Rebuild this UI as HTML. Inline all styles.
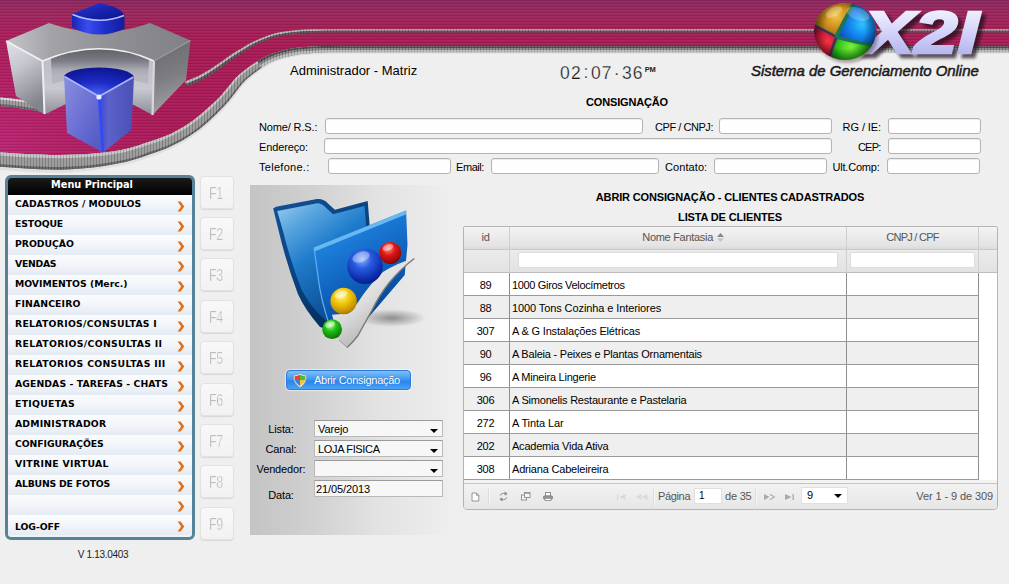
<!DOCTYPE html>
<html lang="pt-br">
<head>
<meta charset="utf-8">
<title>X2I - Sistema de Gerenciamento Online</title>
<style>
html,body{margin:0;padding:0;}
body{width:1009px;height:584px;overflow:hidden;background:#efefef;position:relative;font-family:"Liberation Sans",sans-serif;font-size:11px;color:#111;}
.abs{position:absolute;white-space:nowrap;}
#hdr{position:absolute;left:0;top:0;width:1009px;height:180px;}
.lbl{position:absolute;white-space:nowrap;font-size:11px;line-height:14px;letter-spacing:-0.15px;color:#000;}
.inp{position:absolute;box-sizing:border-box;height:16px;background:#fff;border:1px solid #b4b4b4;border-radius:3px;box-shadow:inset 0 1px 1px rgba(0,0,0,.08);}
.ttl{position:absolute;white-space:nowrap;font-weight:bold;font-size:11px;line-height:14px;letter-spacing:-0.15px;color:#000;text-align:center;}
/*MENU*/
#menu{position:absolute;left:5px;top:175px;width:190px;height:365px;box-sizing:border-box;border:3px solid #56839a;border-radius:6px;background:#eef3f8;overflow:hidden;}
#menu .mt{height:17px;background:linear-gradient(#1a1a1a,#000);color:#fff;font-family:"DejaVu Sans","Liberation Sans",sans-serif;font-weight:bold;font-size:9.750px;line-height:14px;text-align:center;text-indent:-16px;}
#menu .mi{position:relative;height:20px;background:linear-gradient(#fbfcfe 0%,#f3f6fa 45%,#e4ebf3 100%);font-family:"DejaVu Sans","Liberation Sans",sans-serif;font-weight:bold;font-size:9.300px;line-height:18px;padding-left:7px;color:#000;}
#menu .mi i{position:absolute;right:7px;top:6px;width:8px;height:11px;line-height:0;}
/*FKEYS*/
.fk{position:absolute;left:200px;width:34px;height:33px;box-sizing:border-box;border:1px solid #e2e2e2;border-radius:4px;background:linear-gradient(#f8f8f8,#f2f2f2);box-shadow:0 1px 1px rgba(0,0,0,.10);color:#a4a4a4;font-size:16px;line-height:33px;text-align:center;letter-spacing:-0.5px;}
.fk span{display:inline-block;transform:scaleX(.78);-webkit-text-stroke:0.55px #f5f5f5;position:relative;left:-1px;}

/*PANEL*/
#panel{position:absolute;left:250px;top:185px;width:200px;height:350px;background:linear-gradient(90deg,#c4c4c4 0%,#d0d0d0 30%,#e3e3e3 65%,#eeeeee 100%);}
.sel{position:absolute;left:314px;width:129px;height:17px;box-sizing:border-box;background:#f7f7f7;border:1px solid #b9b9b9;border-top-color:#9a9a9a;font-size:11px;line-height:16px;padding-left:3px;color:#000;letter-spacing:-0.1px;}
.sel:after{content:"";position:absolute;right:4px;top:8px;border:4px solid transparent;border-top:4px solid #000;border-bottom:0;}
.pl{position:absolute;left:250px;width:62px;text-align:center;font-size:11px;line-height:14px;letter-spacing:-0.15px;color:#000;}
#btn{position:absolute;left:286px;top:370px;width:125px;height:20px;box-sizing:border-box;border:1px solid #2a7adf;border-radius:4px;background:linear-gradient(#7dc1fa 0%,#4099f2 45%,#2b85ec 58%,#49a3f6 100%);color:#fff;font-size:11px;line-height:19px;letter-spacing:-0.27px;text-shadow:0 0 1px rgba(0,60,160,.55);box-shadow:0 0 1px 1px rgba(255,255,255,.55);}
#btn span{position:absolute;left:27px;top:0;}
/*GRID*/
#grid{position:absolute;left:463px;top:226px;width:535px;height:284px;box-sizing:border-box;border:1px solid #b5b5b5;border-radius:2px 2px 4px 4px;background:#f3f3f3;overflow:hidden;}
#grid .gh{position:absolute;left:0;top:0;width:100%;height:23px;background:linear-gradient(#f4f4f4,#e3e3e3 85%,#dadada);border-bottom:1px solid #c9c9c9;box-sizing:border-box;}
#grid .gf{position:absolute;left:0;top:23px;width:100%;height:23px;background:linear-gradient(#ececec,#e2e2e2);border-bottom:1px solid #bdbdbd;box-sizing:border-box;}
#grid .hc{position:absolute;top:0;height:46px;border-right:1px solid #cfcfcf;box-sizing:border-box;color:#555;font-size:11px;line-height:20px;text-align:center;letter-spacing:-0.3px;}
#grid .fi{position:absolute;top:25px;height:16px;box-sizing:border-box;background:#fff;border:1px solid #dcdcdc;border-radius:2px;}
#grid .row{position:absolute;left:0;width:515px;height:23px;box-sizing:border-box;border-bottom:1px solid #9a9a9a;font-size:11px;line-height:25px;letter-spacing:-0.3px;color:#000;}
#grid .row.alt{background:#efefef;} #grid .row{background:#fff;}
#grid .row b{position:absolute;left:0;top:0;width:46px;height:22px;border-right:1px solid #8f8f8f;font-weight:normal;text-align:center;box-sizing:border-box;text-indent:-2px;}
#grid .row u{position:absolute;left:46px;top:0;width:337px;height:22px;border-right:1px solid #8f8f8f;text-decoration:none;padding-left:2px;box-sizing:border-box;}
#grid .row s{position:absolute;left:383px;top:0;width:132px;height:22px;border-right:1px solid #8f8f8f;box-sizing:border-box;}
#grid .gut{position:absolute;left:515px;top:46px;width:19px;height:207px;background:#fff;}
#grid .pg{position:absolute;left:-1px;top:256px;width:536px;height:27px;background:linear-gradient(#f2f2f2,#e6e6e6);border-top:1px solid #c4c4c4;box-sizing:border-box;font-size:11px;line-height:25px;color:#555;}
#grid .pg .t{position:absolute;top:0;white-space:nowrap;}
#grid .pg .bx{position:absolute;top:5px;height:16px;background:#fff;box-sizing:border-box;border:1px solid #e0e0e0;color:#000;line-height:14px;padding-left:4px;font-size:10px;}
#grid .pg .sp{position:absolute;top:4px;width:1px;height:18px;background:#dedede;border-right:1px solid #f6f6f6;}
.sel.nd:after{display:none;}.sel.nd{line-height:17px;padding-left:1px;}
#menu .mi.last{line-height:23px;}
</style>
</head>
<body>
<!--HEADER-->
<svg id="hdr" viewBox="0 0 1009 180">
<defs>
<linearGradient id="gm" x1="0" y1="0" x2="0" y2="180" gradientUnits="userSpaceOnUse">
<stop offset="0" stop-color="#8e2a62"/><stop offset=".08" stop-color="#9e285f"/><stop offset=".17" stop-color="#a72058"/><stop offset=".27" stop-color="#aa1c57"/><stop offset="1" stop-color="#ae1c5c"/>
</linearGradient>
<radialGradient id="gp" cx="0" cy="150" r="170" gradientUnits="userSpaceOnUse"><stop offset="0" stop-color="#d03494" stop-opacity=".45"/><stop offset=".5" stop-color="#c82c88" stop-opacity=".22"/><stop offset="1" stop-color="#c02878" stop-opacity="0"/></radialGradient>
<pattern id="hl" width="6" height="3" patternUnits="userSpaceOnUse"><rect width="6" height="1" fill="#000" opacity=".10"/><rect y="1" width="6" height="1" fill="#fff" opacity=".03"/></pattern>
<pattern id="vt" width="3" height="4" patternUnits="userSpaceOnUse"><rect width="1" height="4" fill="#000" opacity=".17"/><rect x="1.500" width="1" height="4" fill="#fff" opacity=".10"/></pattern>
<linearGradient id="gr1" x1="0" y1="0" x2="0" y2="1"><stop offset="0" stop-color="#3a3a3a"/><stop offset=".35" stop-color="#7e7e7e"/><stop offset=".75" stop-color="#a9a9a9"/><stop offset="1" stop-color="#d9d9d9"/></linearGradient>
</defs>
<path d="M0,0H1009V49.2H400L400.0,49.2L378.7,49.2L357.3,49.2L340.0,49.2L329.3,49.2L322.7,49.3L316.0,49.6L308.0,50.1L300.0,50.7L292.0,52.0L284.0,53.8L276.0,56.1L268.0,59.5L259.6,64.4L251.1,70.4L244.0,76.0L239.1,80.7L235.6,85.1L232.0,89.5L228.4,93.9L224.9,98.3L220.0,103.5L212.9,110.4L204.4,118.1L196.0,125.0L188.0,130.6L180.0,135.3L172.0,139.5L164.0,143.0L156.0,145.8L148.0,148.5L140.3,151.2L132.6,153.6L124.0,155.8L113.9,157.7L103.0,159.3L92.0,160.6L81.3,161.5L70.5,162.0L60.0,162.3L49.9,162.3L39.9,161.9L30.0,161.5L19.3,160.9L8.5,160.2L0.0,159.6L-4.8,159.3L-7.4,159.2L-10.0,159.0Z" fill="url(#gm)"/>
<path d="M0,0H1009V49.2H400L400.0,49.2L378.7,49.2L357.3,49.2L340.0,49.2L329.3,49.2L322.7,49.3L316.0,49.6L308.0,50.1L300.0,50.7L292.0,52.0L284.0,53.8L276.0,56.1L268.0,59.5L259.6,64.4L251.1,70.4L244.0,76.0L239.1,80.7L235.6,85.1L232.0,89.5L228.4,93.9L224.9,98.3L220.0,103.5L212.9,110.4L204.4,118.1L196.0,125.0L188.0,130.6L180.0,135.3L172.0,139.5L164.0,143.0L156.0,145.8L148.0,148.5L140.3,151.2L132.6,153.6L124.0,155.8L113.9,157.7L103.0,159.3L92.0,160.6L81.3,161.5L70.5,162.0L60.0,162.3L49.9,162.3L39.9,161.9L30.0,161.5L19.3,160.9L8.5,160.2L0.0,159.6L-4.8,159.3L-7.4,159.2L-10.0,159.0Z" fill="url(#gp)"/>
<path d="M0,0H1009V49.2H400L400.0,49.2L378.7,49.2L357.3,49.2L340.0,49.2L329.3,49.2L322.7,49.3L316.0,49.6L308.0,50.1L300.0,50.7L292.0,52.0L284.0,53.8L276.0,56.1L268.0,59.5L259.6,64.4L251.1,70.4L244.0,76.0L239.1,80.7L235.6,85.1L232.0,89.5L228.4,93.9L224.9,98.3L220.0,103.5L212.9,110.4L204.4,118.1L196.0,125.0L188.0,130.6L180.0,135.3L172.0,139.5L164.0,143.0L156.0,145.8L148.0,148.5L140.3,151.2L132.6,153.6L124.0,155.8L113.9,157.7L103.0,159.3L92.0,160.6L81.3,161.5L70.5,162.0L60.0,162.3L49.9,162.3L39.9,161.9L30.0,161.5L19.3,160.9L8.5,160.2L0.0,159.6L-4.8,159.3L-7.4,159.2L-10.0,159.0Z" fill="url(#hl)"/>
<path d="M185.0,81.4L188.7,80.0L192.3,78.6L195.9,77.1L199.4,75.4L203.0,73.5L206.7,71.3L210.6,68.9L214.6,66.3L218.6,63.5L222.7,60.7L226.7,57.8L230.7,55.1L234.5,52.6L238.2,50.3L241.9,48.2L245.3,46.0L248.7,44.0L252.6,42.0L257.0,39.9L261.7,37.9L266.3,36.2L270.3,34.7L274.3,33.5L279.7,32.3L286.8,31.2L295.3,30.2L304.9,29.5L315.0,29.2L326.1,29.2L340.0,29.2L358.1,29.2L379.1,29.2L400.0,29.2H1009V30.8H400L400.0,30.8L379.1,30.8L358.1,30.8L340.0,30.8L326.1,30.8L315.0,30.9L305.0,31.3L295.5,32.1L287.1,33.1L280.0,34.2L274.8,35.3L270.9,36.6L267.0,38.0L262.4,39.8L257.8,41.8L253.5,43.8L249.8,45.8L246.4,47.9L243.0,50.0L239.4,52.2L235.8,54.5L232.0,57.0L228.1,59.7L224.0,62.6L220.0,65.5L216.0,68.3L211.9,71.0L208.0,73.5L204.3,75.7L200.6,77.7L197.0,79.5L193.3,81.1L189.7,82.6L186.0,84.0Z" fill="#b9b9b9"/>
<path d="M186.0,84.0L189.7,82.6L193.3,81.1L197.0,79.5L200.6,77.7L204.3,75.7L208.0,73.5L211.9,71.0L216.0,68.3L220.0,65.5L224.0,62.6L228.1,59.7L232.0,57.0L235.8,54.5L239.4,52.2L243.0,50.0L246.4,47.9L249.8,45.8L253.5,43.8L257.8,41.8L262.4,39.8L267.0,38.0L270.9,36.6L274.8,35.3L280.0,34.2L287.1,33.1L295.5,32.1L305.0,31.3L315.0,30.9L326.1,30.8L340.0,30.8L358.1,30.8L379.1,30.8L400.0,30.8H1009V32.4H400L400.0,32.4L379.1,32.4L358.1,32.4L340.0,32.4L326.1,32.5L315.0,32.7L305.1,33.1L295.7,33.9L287.3,34.9L280.3,36.1L275.3,37.2L271.6,38.4L267.7,39.8L263.2,41.6L258.6,43.6L254.4,45.6L250.8,47.6L247.5,49.7L244.1,51.8L240.6,54.1L237.0,56.4L233.3,58.9L229.4,61.6L225.4,64.6L221.4,67.5L217.3,70.3L213.3,73.1L209.3,75.7L205.5,77.9L201.8,80.0L198.1,81.9L194.4,83.6L190.7,85.1L187.0,86.6Z" fill="#555"/>
<path d="M185.0,81.4L188.7,80.0L192.3,78.6L195.9,77.1L199.4,75.4L203.0,73.5L206.7,71.3L210.6,68.9L214.6,66.3L218.6,63.5L222.7,60.7L226.7,57.8L230.7,55.1L234.5,52.6L238.2,50.3L241.9,48.2L245.3,46.0L248.7,44.0L252.6,42.0L257.0,39.9L261.7,37.9L266.3,36.2L270.3,34.7L274.3,33.5L279.7,32.3L286.8,31.2L295.3,30.2L304.9,29.5L315.0,29.2L326.1,29.2L340.0,29.2L358.1,29.2L379.1,29.2L400.0,29.2H1009V32.4H400L400.0,32.4L379.1,32.4L358.1,32.4L340.0,32.4L326.1,32.5L315.0,32.7L305.1,33.1L295.7,33.9L287.3,34.9L280.3,36.1L275.3,37.2L271.6,38.4L267.7,39.8L263.2,41.6L258.6,43.6L254.4,45.6L250.8,47.6L247.5,49.7L244.1,51.8L240.6,54.1L237.0,56.4L233.3,58.9L229.4,61.6L225.4,64.6L221.4,67.5L217.3,70.3L213.3,73.1L209.3,75.7L205.5,77.9L201.8,80.0L198.1,81.9L194.4,83.6L190.7,85.1L187.0,86.6Z" fill="url(#vt)"/>
<path d="M-9.7,96.8L0.1,97.5L10.5,98.4L22.8,100.0L34.7,101.8L43.4,103.6L51.0,105.4L49.0,113.6L41.6,111.9L33.3,110.2L21.7,108.4L9.5,106.8L-0.6,105.9L-10.3,105.2Z" fill="#9a9a9a"/>
<path d="M-9.7,96.8L0.1,97.5L10.5,98.4L22.8,100.0L34.7,101.8L43.4,103.6L51.0,105.4L50.5,107.3L43.0,105.5L34.4,103.8L22.6,102.0L10.2,100.4L-0.1,99.4L-9.8,98.8Z" fill="#e2e2e2"/>
<path d="M-10.2,103.2L-0.4,103.9L9.8,104.8L21.9,106.4L33.6,108.2L42.0,109.9L49.5,111.7L49.0,113.6L41.6,111.9L33.3,110.2L21.7,108.4L9.5,106.8L-0.6,105.9L-10.3,105.2Z" fill="#6a6a6a"/>
<path d="M-9.7,96.8L0.1,97.5L10.5,98.4L22.8,100.0L34.7,101.8L43.4,103.6L51.0,105.4L49.0,113.6L41.6,111.9L33.3,110.2L21.7,108.4L9.5,106.8L-0.6,105.9L-10.3,105.2Z" fill="url(#vt)"/>
<path d="M-9.6,151.9L-7.0,152.0L-4.4,152.2L0.5,152.5L9.0,153.0L19.7,153.7L30.4,154.2L40.2,154.6L50.0,154.9L59.9,154.9L70.2,154.8L80.8,154.5L91.3,153.8L102.1,152.8L112.9,151.4L122.7,149.7L130.9,147.7L138.4,145.4L146.1,142.8L154.1,140.2L161.9,137.6L169.6,134.4L177.3,130.5L185.1,126.0L192.8,120.8L201.1,114.2L209.5,106.8L216.6,100.2L221.4,95.2L224.9,91.0L228.5,86.7L232.2,82.3L236.0,77.8L241.3,72.9L248.7,67.2L257.5,61.3L266.3,56.2L274.8,52.8L283.1,50.4L291.4,48.6L299.6,47.4L307.8,46.8L315.8,46.4L322.6,46.1L329.3,46.1L340.0,46.2L357.3,46.2L378.7,46.2L400.0,46.2H1009V53.5H400L400.0,53.5L378.7,53.5L357.3,53.5L340.0,53.5L329.4,53.7L322.8,53.9L316.2,54.2L308.3,54.8L300.6,55.6L292.9,56.9L285.3,58.7L277.7,61.0L270.4,64.2L262.5,69.0L254.5,75.0L247.9,80.5L243.6,84.9L240.4,89.0L237.0,93.5L233.5,98.0L229.9,102.6L224.9,108.3L217.7,115.5L209.3,123.7L200.6,131.1L192.2,137.1L183.9,142.3L175.5,146.9L167.1,150.7L158.8,153.9L150.8,156.7L143.1,159.5L135.0,162.2L125.9,164.6L115.5,166.8L104.2,168.8L93.0,170.4L81.9,171.6L70.9,172.4L60.1,173.0L49.7,172.9L39.5,172.5L29.5,172.0L18.6,171.3L7.8,170.5L-0.7,169.9L-5.4,169.6L-8.0,169.4L-10.6,169.3Z" fill="#e0e0e0"/>
<path d="M-9.6,151.9L-7.0,152.0L-4.4,152.2L0.5,152.5L9.0,153.0L19.7,153.7L30.4,154.2L40.2,154.6L50.0,154.9L59.9,154.9L70.2,154.8L80.8,154.5L91.3,153.8L102.1,152.8L112.9,151.4L122.7,149.7L130.9,147.7L138.4,145.4L146.1,142.8L154.1,140.2L161.9,137.6L169.6,134.4L177.3,130.5L185.1,126.0L192.8,120.8L201.1,114.2L209.5,106.8L216.6,100.2L221.4,95.2L224.9,91.0L228.5,86.7L232.2,82.3L236.0,77.8L241.3,72.9L248.7,67.2L257.5,61.3L266.3,56.2L274.8,52.8L283.1,50.4L291.4,48.6L299.6,47.4L307.8,46.8L315.8,46.4L322.6,46.1L329.3,46.1L340.0,46.2L357.3,46.2L378.7,46.2L400.0,46.2H1009V52.2H400L400.0,52.2L378.7,52.2L357.3,52.2L340.0,52.2L329.4,52.3L322.8,52.5L316.2,52.8L308.2,53.4L300.4,54.1L292.6,55.4L284.9,57.2L277.2,59.5L269.7,62.8L261.6,67.6L253.5,73.6L246.7,79.1L242.2,83.6L238.9,87.8L235.5,92.3L232.0,96.7L228.4,101.3L223.4,106.8L216.3,114.0L207.8,122.0L199.2,129.2L190.9,135.1L182.7,140.2L174.4,144.6L166.1,148.4L157.9,151.4L149.9,154.2L142.2,156.9L134.3,159.6L125.3,161.9L115.0,164.0L103.8,165.9L92.7,167.4L81.7,168.5L70.8,169.2L60.1,169.7L49.7,169.6L39.6,169.3L29.6,168.8L18.8,168.1L8.0,167.3L-0.5,166.7L-5.2,166.4L-7.8,166.3L-10.4,166.1Z" fill="#999"/>
<path d="M-9.6,151.9L-7.0,152.0L-4.4,152.2L0.5,152.5L9.0,153.0L19.7,153.7L30.4,154.2L40.2,154.6L50.0,154.9L59.9,154.9L70.2,154.8L80.8,154.5L91.3,153.8L102.1,152.8L112.9,151.4L122.7,149.7L130.9,147.7L138.4,145.4L146.1,142.8L154.1,140.2L161.9,137.6L169.6,134.4L177.3,130.5L185.1,126.0L192.8,120.8L201.1,114.2L209.5,106.8L216.6,100.2L221.4,95.2L224.9,91.0L228.5,86.7L232.2,82.3L236.0,77.8L241.3,72.9L248.7,67.2L257.5,61.3L258.4,62.7L249.8,68.6L242.5,74.2L237.4,79.1L233.7,83.5L230.1,87.9L226.5,92.2L222.9,96.6L218.1,101.6L211.0,108.4L202.6,115.9L194.2,122.6L186.4,128.0L178.5,132.6L170.6,136.6L162.8,140.0L154.9,142.7L146.9,145.3L139.2,147.9L131.6,150.3L123.3,152.4L113.3,154.2L102.5,155.7L91.6,156.8L81.0,157.6L70.4,158.0L60.0,158.2L49.9,158.1L40.1,157.8L30.2,157.4L19.5,156.9L8.8,156.2L0.3,155.6L-4.6,155.3L-7.2,155.2L-9.8,155.0Z" fill="#c6c6c6"/>
<path d="M-10.3,163.6L-7.7,163.7L-5.1,163.9L-0.3,164.2L8.2,164.8L19.0,165.5L29.8,166.2L39.7,166.6L49.8,167.0L60.1,167.0L70.7,166.6L81.6,166.0L92.4,164.9L103.5,163.5L114.6,161.7L124.9,159.7L133.7,157.4L141.5,154.9L149.2,152.1L157.2,149.4L165.4,146.4L173.6,142.8L181.7,138.4L189.9,133.5L198.1,127.7L206.6,120.6L215.0,112.7L222.2,105.6L227.1,100.2L230.7,95.7L234.2,91.3L237.7,86.8L241.1,82.6L245.7,78.0L252.6,72.4L260.9,66.5L261.6,67.6L253.5,73.6L246.7,79.1L242.2,83.6L238.9,87.8L235.5,92.3L232.0,96.7L228.4,101.3L223.4,106.8L216.3,114.0L207.8,122.0L199.2,129.2L190.9,135.1L182.7,140.2L174.4,144.6L166.1,148.4L157.9,151.4L149.9,154.2L142.2,156.9L134.3,159.6L125.3,161.9L115.0,164.0L103.8,165.9L92.7,167.4L81.7,168.5L70.8,169.2L60.1,169.7L49.7,169.6L39.6,169.3L29.6,168.8L18.8,168.1L8.0,167.3L-0.5,166.7L-5.2,166.4L-7.8,166.3L-10.4,166.1Z" fill="#636363"/>
<path d="M257.5,61.3L266.3,56.2L274.8,52.8L283.1,50.4L291.4,48.6L299.6,47.4L307.8,46.8L315.8,46.4L322.6,46.1L329.3,46.1L340.0,46.2L357.3,46.2L378.7,46.2L400.0,46.2H1009V48.0H400L400.0,48.0L378.7,48.0L357.3,48.0L340.0,48.0L329.3,48.0L322.6,48.0L315.9,48.3L307.9,48.7L299.8,49.4L291.7,50.6L283.6,52.4L275.5,54.8L267.3,58.2L258.7,63.2Z" fill="#4c4c4c"/>
<path d="M258.7,63.2L267.3,58.2L275.5,54.8L283.6,52.4L291.7,50.6L299.8,49.4L307.9,48.7L315.9,48.3L322.6,48.0L329.3,48.0L340.0,48.0L357.3,48.0L378.7,48.0L400.0,48.0H1009V49.9H400L400.0,49.9L378.7,49.9L357.3,49.9L340.0,49.9L329.3,50.0L322.7,50.1L316.0,50.4L308.1,50.9L300.1,51.6L292.2,52.8L284.2,54.6L276.3,57.0L268.4,60.3L260.0,65.2Z" fill="#858585"/>
<path d="M260.0,65.2L268.4,60.3L276.3,57.0L284.2,54.6L292.2,52.8L300.1,51.6L308.1,50.9L316.0,50.4L322.7,50.1L329.3,50.0L340.0,49.9L357.3,49.9L378.7,49.9L400.0,49.9H1009V52.2H400L400.0,52.2L378.7,52.2L357.3,52.2L340.0,52.2L329.4,52.3L322.8,52.5L316.2,52.8L308.2,53.4L300.4,54.1L292.6,55.4L284.9,57.2L277.2,59.5L269.7,62.8L261.6,67.6Z" fill="#bdbdbd"/>
<path d="M-9.6,151.9L-7.0,152.0L-4.4,152.2L0.5,152.5L9.0,153.0L19.7,153.7L30.4,154.2L40.2,154.6L50.0,154.9L59.9,154.9L70.2,154.8L80.8,154.5L91.3,153.8L102.1,152.8L112.9,151.4L122.7,149.7L130.9,147.7L138.4,145.4L146.1,142.8L154.1,140.2L161.9,137.6L169.6,134.4L177.3,130.5L185.1,126.0L192.8,120.8L201.1,114.2L209.5,106.8L216.6,100.2L221.4,95.2L224.9,91.0L228.5,86.7L232.2,82.3L236.0,77.8L241.3,72.9L248.7,67.2L257.5,61.3L266.3,56.2L274.8,52.8L283.1,50.4L291.4,48.6L299.6,47.4L307.8,46.8L315.8,46.4L322.6,46.1L329.3,46.1L340.0,46.2L357.3,46.2L378.7,46.2L400.0,46.2H1009V52.2H400L400.0,52.2L378.7,52.2L357.3,52.2L340.0,52.2L329.4,52.3L322.8,52.5L316.2,52.8L308.2,53.4L300.4,54.1L292.6,55.4L284.9,57.2L277.2,59.5L269.7,62.8L261.6,67.6L253.5,73.6L246.7,79.1L242.2,83.6L238.9,87.8L235.5,92.3L232.0,96.7L228.4,101.3L223.4,106.8L216.3,114.0L207.8,122.0L199.2,129.2L190.9,135.1L182.7,140.2L174.4,144.6L166.1,148.4L157.9,151.4L149.9,154.2L142.2,156.9L134.3,159.6L125.3,161.9L115.0,164.0L103.8,165.9L92.7,167.4L81.7,168.5L70.8,169.2L60.1,169.7L49.7,169.6L39.6,169.3L29.6,168.8L18.8,168.1L8.0,167.3L-0.5,166.7L-5.2,166.4L-7.8,166.3L-10.4,166.1Z" fill="url(#vt)"/>
<defs>
<linearGradient id="lgTop" x1="0" y1="0" x2="1" y2="0"><stop offset="0" stop-color="#c6c6ca"/><stop offset=".25" stop-color="#a2a2a7"/><stop offset=".6" stop-color="#8e8e93"/><stop offset="1" stop-color="#808085"/></linearGradient>
<linearGradient id="lgLeft" x1="0" y1="0" x2=".35" y2="1"><stop offset="0" stop-color="#e3e3ea"/><stop offset=".45" stop-color="#c3c3cb"/><stop offset="1" stop-color="#84848c"/></linearGradient>
<linearGradient id="lgRight" x1="0" y1="0" x2=".2" y2="1"><stop offset="0" stop-color="#68686c"/><stop offset=".55" stop-color="#7e7e82"/><stop offset="1" stop-color="#a2a2a6"/></linearGradient>
<linearGradient id="lgFront" x1="0" y1="0" x2="0" y2="1"><stop offset="0" stop-color="#b9b9c1"/><stop offset=".6" stop-color="#c9c9d1"/><stop offset="1" stop-color="#8e8e96"/></linearGradient>
<linearGradient id="lgWall" x1="0" y1="0" x2="0" y2="1"><stop offset="0" stop-color="#5e5e66"/><stop offset=".35" stop-color="#7c7c86"/><stop offset=".6" stop-color="#a9a9b3"/><stop offset="1" stop-color="#c6c6ce"/></linearGradient>
<linearGradient id="lgCubeL" x1="0" y1="0" x2="1" y2="1"><stop offset="0" stop-color="#8a8fe0"/><stop offset=".5" stop-color="#6b70d4"/><stop offset="1" stop-color="#4f55c2"/></linearGradient>
<linearGradient id="lgCubeR" x1="0" y1="0" x2="1" y2="0"><stop offset="0" stop-color="#3a45d6"/><stop offset=".25" stop-color="#5b62c9"/><stop offset="1" stop-color="#4a50b4"/></linearGradient>
<radialGradient id="lgCubeT" cx=".45" cy=".9" r=".9"><stop offset="0" stop-color="#4a5cf0"/><stop offset=".45" stop-color="#1d2bc4"/><stop offset="1" stop-color="#0c1590"/></radialGradient>
<linearGradient id="lgCapS" x1="0" y1="0" x2="1" y2="0"><stop offset="0" stop-color="#1a24b0"/><stop offset=".3" stop-color="#3a4cf0"/><stop offset=".6" stop-color="#2030d0"/><stop offset="1" stop-color="#141c98"/></linearGradient>
<linearGradient id="lgCapT" x1="0" y1="0" x2="1" y2="1"><stop offset="0" stop-color="#2a3ad8"/><stop offset=".6" stop-color="#1420a8"/><stop offset="1" stop-color="#0c1488"/></linearGradient>
</defs>
<g id="logo">
<path d="M154,61L190.5,40.5L186,80L152.5,115Z" fill="url(#lgRight)"/>
<path d="M6,41L42.5,61L44.5,114.5L16,96Z" fill="url(#lgLeft)"/>
<path d="M42.5,61Q100,36.5 154,61L152.5,115L134,105L66,104L44.5,114.5Z" fill="url(#lgFront)"/>
<path d="M51,58.5Q100,38 149,59L148,84Q100,70 52,84Z" fill="url(#lgWall)"/>
<path d="M52,76Q100,60 148,78L148,84Q100,68 52,84Z" fill="#b4b4be" opacity=".8"/>
<path d="M6,41L49,23Q100,41 150,23L190.5,40.5L154,61Q100,36.5 42.5,61Z" fill="url(#lgTop)"/>
<path d="M6,41L42.5,61Q100,36.5 154,61" fill="none" stroke="#f2f2f6" stroke-width="1.6" stroke-linejoin="round"/>
<path d="M42.5,61L44.5,114" stroke="#eeeef4" stroke-width="2" fill="none"/>
<path d="M154,61L152.5,115" stroke="#d6d6dc" stroke-width="2.2" fill="none"/>
<path d="M154,61L190.5,40.5" stroke="#9c9ca0" stroke-width="1.2" fill="none"/>
<path d="M72,14L72,27.400Q99,41 124.500,28.800L124.500,15Q99,26 72,14Z" fill="url(#lgCapS)"/>
<path d="M72,14L99,3.300Q118.500,6 124.500,15Q99,26 72,14Z" fill="url(#lgCapT)"/>
<path d="M72.500,14.500Q99,25.500 124,15.500" stroke="#b4c2ff" stroke-width="1.600" fill="none"/>
<path d="M64,76L99,96.500L103,152.500L67,133Z" fill="url(#lgCubeL)"/>
<path d="M99,96.500L134,76.500L131.500,130L103,152.500Z" fill="url(#lgCubeR)"/>
<path d="M64,76Q70,68 99,67.5Q128,68 134,76.5L99,96.5Z" fill="url(#lgCubeT)"/>
<path d="M64.5,76.5L99,96.5L133.5,77" stroke="#aab6ff" stroke-width="1.6" fill="none" stroke-linejoin="round"/>
<path d="M99,97L103,152" stroke="#2d48ff" stroke-width="2.400" fill="none"/>
<circle cx="99" cy="97" r="2.6" fill="#e8ecff"/>
</g>

<defs>
<clipPath id="spc"><ellipse cx="845" cy="31.500" rx="31" ry="28.500"/></clipPath>
<radialGradient id="sBl" cx="862" cy="24" r="26" gradientUnits="userSpaceOnUse"><stop offset="0" stop-color="#2fc4ff"/><stop offset=".45" stop-color="#148af0"/><stop offset="1" stop-color="#0a48c0"/></radialGradient>
<radialGradient id="sOr" cx="836" cy="16" r="24" gradientUnits="userSpaceOnUse"><stop offset="0" stop-color="#f0c648"/><stop offset=".5" stop-color="#cf8e1a"/><stop offset="1" stop-color="#86620f"/></radialGradient>
<radialGradient id="sRd" cx="826" cy="42" r="16" gradientUnits="userSpaceOnUse"><stop offset="0" stop-color="#ff3a4a"/><stop offset=".6" stop-color="#e21838"/><stop offset="1" stop-color="#9a1040"/></radialGradient>
<radialGradient id="sGr" cx="851" cy="47" r="22" gradientUnits="userSpaceOnUse"><stop offset="0" stop-color="#7cf03a"/><stop offset=".55" stop-color="#36c81c"/><stop offset="1" stop-color="#128410"/></radialGradient>
<radialGradient id="sSh" cx="845" cy="29" r="32" gradientUnits="userSpaceOnUse"><stop offset=".62" stop-color="#000" stop-opacity="0"/><stop offset="1" stop-color="#000" stop-opacity=".45"/></radialGradient>
<linearGradient id="xg" x1="0" y1="9" x2="0" y2="54" gradientUnits="userSpaceOnUse"><stop offset="0" stop-color="#f2f2ff"/><stop offset=".5" stop-color="#d4d4fb"/><stop offset="1" stop-color="#b4b6ee"/></linearGradient>
<filter id="xbl" x="-10%" y="-10%" width="125%" height="130%"><feGaussianBlur stdDeviation="1.6"/></filter>
</defs>
<g font-family="'Liberation Sans',sans-serif" font-weight="bold" font-style="italic" font-size="59">
<text x="867" y="57" textLength="116" lengthAdjust="spacingAndGlyphs" fill="#1a0a14" stroke="#1a0a14" stroke-width="2.500" opacity=".7" filter="url(#xbl)">X2I</text>
<text x="863" y="53" textLength="116" lengthAdjust="spacingAndGlyphs" fill="url(#xg)" stroke="url(#xg)" stroke-width="2.500" stroke-linejoin="miter">X2I</text>
</g>
<ellipse cx="847" cy="36" rx="31" ry="27" fill="#300818" opacity=".35" filter="url(#xbl)"/>
<g clip-path="url(#spc)">
<rect x="810" y="0" width="70" height="62" fill="#1c7458"/>
<path d="M858,0L880,0L880,44.200Q858,41.600 839,35.800Q846.500,20 858,0Z" fill="url(#sBl)"/>
<path d="M810,0L854,0Q842.500,19 835.200,34.600Q824,28 810,22Z" fill="url(#sOr)"/>
<path d="M810,25L834.200,37.600Q830,50 827,62L810,62Z" fill="url(#sRd)"/>
<path d="M837.600,39.200Q858,45 880,47.500L880,62L830,62Q833,50 837.600,39.200Z" fill="url(#sGr)"/>
<path d="M810,23.500L835,36.300M836,37.600Q831,50 828.300,62" stroke="#7a1048" stroke-width="1.800" fill="none"/>
<ellipse cx="845" cy="31.500" rx="31" ry="28.500" fill="url(#sSh)"/>
<ellipse cx="858" cy="14" rx="12" ry="6" fill="#fff" opacity=".22" transform="rotate(20 858 14)"/>
<ellipse cx="834" cy="12" rx="9" ry="4.500" fill="#fff" opacity=".25" transform="rotate(-28 834 12)"/>
</g>

</svg>
<div class="abs" style="left:290px;top:63px;font-size:13px;line-height:16px;color:#000;">Administrador - Matriz</div>
<div class="abs" id="clock" style="left:560px;top:61px;font-size:17.500px;line-height:24px;color:#1c1c1c;letter-spacing:1.200px;-webkit-text-stroke:0.25px #f0f0f0;">02<span style="margin:0 1.500px 0 1.500px;position:relative;top:-1px;">:</span>07<span style="margin:0 1.500px 0 1.500px;position:relative;top:-4px;">.</span>36<span style="font-size:7.500px;letter-spacing:-0.3px;position:relative;top:-7px;left:1px;-webkit-text-stroke:0;font-weight:bold;color:#222;">PM</span></div>
<div class="abs" id="slogan" style="left:751px;top:62px;font-size:15px;line-height:18px;font-style:italic;color:#1a1a1a;-webkit-text-stroke:0.5px #1a1a1a;letter-spacing:-0.05px;">Sistema de Gerenciamento Online</div>
<div class="ttl" style="left:577px;width:100px;top:95px;">CONSIGNAÇÃO</div>
<div class="lbl" style="left:259px;top:120px;letter-spacing:-0.14px;">Nome/ R.S.:</div><div class="inp" style="left:325px;top:118px;width:318px;"></div>
<div class="lbl" style="left:655px;top:120px;letter-spacing:-0.45px;">CPF / CNPJ:</div><div class="inp" style="left:719px;top:118px;width:113px;"></div>
<div class="lbl" style="right:128px;top:120px;letter-spacing:-0.09px;">RG / IE:</div><div class="inp" style="left:888px;top:118px;width:93px;"></div>
<div class="lbl" style="left:259px;top:140px;letter-spacing:-0.13px;">Endereço:</div><div class="inp" style="left:324px;top:138px;width:508px;"></div>
<div class="lbl" style="right:128.5px;top:140px;letter-spacing:-0.77px;">CEP:</div><div class="inp" style="left:888px;top:138px;width:93px;"></div>
<div class="lbl" style="left:259px;top:160px;letter-spacing:0.28px;">Telefone.:</div><div class="inp" style="left:328px;top:158px;width:123px;"></div>
<div class="lbl" style="left:456px;top:160px;letter-spacing:-0.43px;">Email:</div><div class="inp" style="left:491px;top:158px;width:168px;"></div>
<div class="lbl" style="left:665px;top:160px;letter-spacing:0.08px;">Contato:</div><div class="inp" style="left:714px;top:158px;width:113px;"></div>
<div class="lbl" style="right:129.5px;top:160px;letter-spacing:-0.21px;">Ult.Comp:</div><div class="inp" style="left:887px;top:158px;width:93px;"></div>
<div id="menu"><div class="mt">Menu Principal</div><div class="mi" style="letter-spacing:0.00px">CADASTROS / MODULOS<i><svg viewBox="0 0 8 11" width="8" height="11"><path d="M.6,.4L3.700,.4L7.300,5.500L3.700,10.600L.6,10.600L4.100,5.500Z" fill="#e2711d"/></svg></i></div><div class="mi" style="letter-spacing:-0.16px">ESTOQUE<i><svg viewBox="0 0 8 11" width="8" height="11"><path d="M.6,.4L3.700,.4L7.300,5.500L3.700,10.600L.6,10.600L4.100,5.500Z" fill="#e2711d"/></svg></i></div><div class="mi" style="letter-spacing:-0.04px">PRODUÇÃO<i><svg viewBox="0 0 8 11" width="8" height="11"><path d="M.6,.4L3.700,.4L7.300,5.500L3.700,10.600L.6,10.600L4.100,5.500Z" fill="#e2711d"/></svg></i></div><div class="mi" style="letter-spacing:-0.28px">VENDAS<i><svg viewBox="0 0 8 11" width="8" height="11"><path d="M.6,.4L3.700,.4L7.300,5.500L3.700,10.600L.6,10.600L4.100,5.500Z" fill="#e2711d"/></svg></i></div><div class="mi" style="letter-spacing:-0.02px">MOVIMENTOS (Merc.)<i><svg viewBox="0 0 8 11" width="8" height="11"><path d="M.6,.4L3.700,.4L7.300,5.500L3.700,10.600L.6,10.600L4.100,5.500Z" fill="#e2711d"/></svg></i></div><div class="mi" style="letter-spacing:0.12px">FINANCEIRO<i><svg viewBox="0 0 8 11" width="8" height="11"><path d="M.6,.4L3.700,.4L7.300,5.500L3.700,10.600L.6,10.600L4.100,5.500Z" fill="#e2711d"/></svg></i></div><div class="mi" style="letter-spacing:0.27px">RELATORIOS/CONSULTAS I<i><svg viewBox="0 0 8 11" width="8" height="11"><path d="M.6,.4L3.700,.4L7.300,5.500L3.700,10.600L.6,10.600L4.100,5.500Z" fill="#e2711d"/></svg></i></div><div class="mi" style="letter-spacing:0.34px">RELATORIOS/CONSULTAS II<i><svg viewBox="0 0 8 11" width="8" height="11"><path d="M.6,.4L3.700,.4L7.300,5.500L3.700,10.600L.6,10.600L4.100,5.500Z" fill="#e2711d"/></svg></i></div><div class="mi" style="letter-spacing:0.32px">RELATORIOS CONSULTAS III<i><svg viewBox="0 0 8 11" width="8" height="11"><path d="M.6,.4L3.700,.4L7.300,5.500L3.700,10.600L.6,10.600L4.100,5.500Z" fill="#e2711d"/></svg></i></div><div class="mi" style="letter-spacing:0.09px">AGENDAS - TAREFAS - CHATS<i><svg viewBox="0 0 8 11" width="8" height="11"><path d="M.6,.4L3.700,.4L7.300,5.500L3.700,10.600L.6,10.600L4.100,5.500Z" fill="#e2711d"/></svg></i></div><div class="mi" style="letter-spacing:0.28px">ETIQUETAS<i><svg viewBox="0 0 8 11" width="8" height="11"><path d="M.6,.4L3.700,.4L7.300,5.500L3.700,10.600L.6,10.600L4.100,5.500Z" fill="#e2711d"/></svg></i></div><div class="mi" style="letter-spacing:0.17px">ADMINISTRADOR<i><svg viewBox="0 0 8 11" width="8" height="11"><path d="M.6,.4L3.700,.4L7.300,5.500L3.700,10.600L.6,10.600L4.100,5.500Z" fill="#e2711d"/></svg></i></div><div class="mi" style="letter-spacing:-0.07px">CONFIGURAÇÕES<i><svg viewBox="0 0 8 11" width="8" height="11"><path d="M.6,.4L3.700,.4L7.300,5.500L3.700,10.600L.6,10.600L4.100,5.500Z" fill="#e2711d"/></svg></i></div><div class="mi" style="letter-spacing:0.31px">VITRINE VIRTUAL<i><svg viewBox="0 0 8 11" width="8" height="11"><path d="M.6,.4L3.700,.4L7.300,5.500L3.700,10.600L.6,10.600L4.100,5.500Z" fill="#e2711d"/></svg></i></div><div class="mi" style="letter-spacing:-0.20px">ALBUNS DE FOTOS<i><svg viewBox="0 0 8 11" width="8" height="11"><path d="M.6,.4L3.700,.4L7.300,5.500L3.700,10.600L.6,10.600L4.100,5.500Z" fill="#e2711d"/></svg></i></div><div class="mi">&nbsp;<i><svg viewBox="0 0 8 11" width="8" height="11"><path d="M.6,.4L3.700,.4L7.300,5.500L3.700,10.600L.6,10.600L4.100,5.500Z" fill="#e2711d"/></svg></i></div><div class="mi last" style="letter-spacing:-0.08px">LOG-OFF<i><svg viewBox="0 0 8 11" width="8" height="11"><path d="M.6,.4L3.700,.4L7.300,5.500L3.700,10.600L.6,10.600L4.100,5.500Z" fill="#e2711d"/></svg></i></div></div>
<div class="abs" style="left:53px;width:100px;text-align:center;top:549px;font-size:10px;line-height:12px;letter-spacing:-0.3px;color:#222;">V 1.13.0403</div>
<div class="fk" style="top:176px;"><span>F1</span></div><div class="fk" style="top:217px;"><span>F2</span></div><div class="fk" style="top:258px;"><span>F3</span></div><div class="fk" style="top:300px;"><span>F4</span></div><div class="fk" style="top:341px;"><span>F5</span></div><div class="fk" style="top:383px;"><span>F6</span></div><div class="fk" style="top:424px;"><span>F7</span></div><div class="fk" style="top:465px;"><span>F8</span></div><div class="fk" style="top:507px;"><span>F9</span></div>
<div id="panel"></div>
<svg id="folder" class="abs" style="left:260px;top:190px;" width="180" height="170" viewBox="260 190 180 170">
<defs>
<linearGradient id="fB" x1="0" y1="0" x2=".6" y2="1"><stop offset="0" stop-color="#0f5296"/><stop offset=".5" stop-color="#0a4482"/><stop offset="1" stop-color="#052c5c"/></linearGradient>
<linearGradient id="fBi" x1="0" y1="0" x2=".55" y2="1"><stop offset="0" stop-color="#9ccaec"/><stop offset=".22" stop-color="#5aa6e0"/><stop offset=".5" stop-color="#1f7ccc"/><stop offset="1" stop-color="#0a4a92"/></linearGradient>
<linearGradient id="fF" x1=".15" y1="0" x2=".55" y2="1"><stop offset="0" stop-color="#2f93e6"/><stop offset=".28" stop-color="#1a7ad6"/><stop offset=".6" stop-color="#0d5cb6"/><stop offset="1" stop-color="#05387c"/></linearGradient>
<linearGradient id="fS" x1=".2" y1="0" x2=".8" y2="1"><stop offset="0" stop-color="#f4f4f4"/><stop offset=".45" stop-color="#dcdcdc"/><stop offset=".8" stop-color="#b4b4b4"/><stop offset="1" stop-color="#8d8d8d"/></linearGradient>
<radialGradient id="bBl" cx=".42" cy=".3" r=".75"><stop offset="0" stop-color="#8fb8ff"/><stop offset=".35" stop-color="#2a5be0"/><stop offset=".8" stop-color="#0a2aa8"/><stop offset="1" stop-color="#061a78"/></radialGradient>
<radialGradient id="bRd" cx=".42" cy=".3" r=".75"><stop offset="0" stop-color="#ff9a8a"/><stop offset=".4" stop-color="#e01818"/><stop offset=".85" stop-color="#980808"/><stop offset="1" stop-color="#640404"/></radialGradient>
<radialGradient id="bYl" cx=".42" cy=".3" r=".75"><stop offset="0" stop-color="#fff6a0"/><stop offset=".4" stop-color="#f2c80c"/><stop offset=".85" stop-color="#c08c00"/><stop offset="1" stop-color="#8a6200"/></radialGradient>
<radialGradient id="bGr" cx=".42" cy=".3" r=".75"><stop offset="0" stop-color="#b8ff9a"/><stop offset=".4" stop-color="#22c018"/><stop offset=".85" stop-color="#0c8208"/><stop offset="1" stop-color="#065404"/></radialGradient>
<radialGradient id="fSh" cx=".5" cy=".5" r=".5"><stop offset="0" stop-color="#000" stop-opacity=".38"/><stop offset="1" stop-color="#000" stop-opacity="0"/></radialGradient>
</defs>
<ellipse cx="392" cy="318" rx="34" ry="9" fill="url(#fSh)"/>
<path d="M273.200,208.600L276,206.800L317,199Q324,198.500 328,203.500L334.900,209.700L367.700,201L370.500,236L330,330L320,327Q305,310 297.900,294.100Q286,262 278.700,231.100Z" fill="url(#fB)"/>
<path d="M277.200,211L316,203.400Q321.500,203 325.500,207.200L333,214.200L364.500,206L367,236L326,321Q309,305 301.500,289.500Q290,260 283,231Z" fill="url(#fBi)"/>
<path d="M313.800,247.500L406.100,210.500L407.500,244.800L404.700,275L345,345L328,321.500Q320,295 318.400,280.400Z" fill="url(#fF)"/>
<path d="M313.800,247.500L406.100,210.500L406.300,214.200L314.500,251.600Z" fill="#69b8f2"/>
<path d="M314,248L318.600,280.400Q320.500,297 328.200,321.500" stroke="#5fb0f0" stroke-width="1.200" fill="none"/>
<path d="M414.300,258.500Q398,262.500 383,272Q369,285 358,302.300Q350,313 347,313.600L332,314.700L339,340L347.200,347.500Q353,342 358.200,335.200Q366,321 371.800,310.500Q380,294 389,283Q400,269.500 414.300,258.500Z" fill="url(#fS)"/>
<path d="M414.300,258.500Q400,269.500 389,283Q380,294 371.800,310.500Q366,321 358.200,335.200Q353,342 347.200,347.500" stroke="#7a7a7a" stroke-width="1.400" fill="none"/>
<path d="M339,340L347.200,347.500" stroke="#9a9a9a" stroke-width="1" fill="none"/>
<circle cx="390.200" cy="253" r="11" fill="url(#bRd)"/>
<circle cx="365" cy="266.200" r="17.800" fill="url(#bBl)"/>
<circle cx="343.600" cy="301" r="13.200" fill="url(#bYl)"/>
<circle cx="332.100" cy="329.200" r="9.900" fill="url(#bGr)"/>
<ellipse cx="361" cy="257" rx="9" ry="5" fill="#fff" opacity=".35" transform="rotate(-20 361 257)"/>
<ellipse cx="388" cy="247.500" rx="5.500" ry="3" fill="#fff" opacity=".4" transform="rotate(-20 388 247.500)"/>
<ellipse cx="341" cy="294.500" rx="6.500" ry="3.600" fill="#fff" opacity=".45" transform="rotate(-20 341 294.500)"/>
<ellipse cx="330" cy="324.500" rx="5" ry="2.800" fill="#fff" opacity=".45" transform="rotate(-20 330 324.500)"/>
</svg>
<div id="btn"><svg class="abs" style="left:5px;top:1px" width="16" height="16" viewBox="0 0 16 16"><path d="M8,1C10,2.6 12.4,3.2 14.6,3.2C14.6,8.8 12.6,13 8,15.4C3.4,13 1.4,8.8 1.4,3.2C3.6,3.2 6,2.6 8,1Z" fill="#e9eef5" stroke="#8796ad" stroke-width=".8"/><path d="M8,2.6V8H2.9C2.6,6.7 2.6,5.4 2.6,4.3C4.6,4.2 6.5,3.6 8,2.6Z" fill="#e2452c"/><path d="M8,2.6C9.500,3.6 11.400,4.200 13.400,4.300C13.400,5.400 13.400,6.700 13.100,8H8Z" fill="#4db848"/><path d="M2.900,8H8V13.900C5.300,12.400 3.600,10.500 2.900,8Z" fill="#3f7fe0"/><path d="M8,8H13.100C12.400,10.500 10.700,12.400 8,13.900Z" fill="#f5c628"/></svg><span>Abrir Consignação</span></div>
<div class="pl" style="top:422px;">Lista:</div><div class="sel" style="top:420px;">Varejo</div>
<div class="pl" style="top:442px;">Canal:</div><div class="sel" style="top:440px;letter-spacing:-0.34px;">LOJA FISICA</div>
<div class="pl" style="top:462px;">Vendedor:</div><div class="sel" style="top:460px;"></div>
<div class="pl" style="top:488px;">Data:</div><div class="sel nd" style="top:480px;">21/05/2013</div>
<div class="ttl" style="left:580px;width:300px;top:190px;">ABRIR CONSIGNAÇÃO - CLIENTES CADASTRADOS</div>
<div class="ttl" style="left:630px;width:200px;top:210px;">LISTA DE CLIENTES</div>
<div id="grid"><div class="gh"></div><div class="gf"></div><div class="hc" style="left:0;width:46px;text-indent:-2px;">id</div><div class="hc" style="left:46px;width:337px;padding-left:10px;">Nome Fantasia <svg width="7" height="9" viewBox="0 0 7 9" style="vertical-align:-1px;margin-left:1px"><path d="M3.5,0L7,4H0Z" fill="#888"/><path d="M0,5.300H7L3.500,9Z" fill="#c4c4c4"/></svg></div><div class="hc" style="left:383px;width:132px;letter-spacing:-0.74px;">CNPJ / CPF</div><div class="fi" style="left:54px;width:320px;"></div><div class="fi" style="left:386px;width:125px;"></div><div class="gut"></div><div class="row" style="top:46px;"><b>89</b><u style="letter-spacing:-0.34px">1000 Giros Velocímetros</u><s></s></div><div class="row alt" style="top:69px;"><b>88</b><u style="letter-spacing:-0.10px">1000 Tons Cozinha e Interiores</u><s></s></div><div class="row" style="top:92px;"><b>307</b><u style="letter-spacing:-0.17px">A &amp; G Instalações Elétricas</u><s></s></div><div class="row alt" style="top:115px;"><b>90</b><u style="letter-spacing:-0.21px">A Baleia - Peixes e Plantas Ornamentais</u><s></s></div><div class="row" style="top:138px;"><b>96</b><u style="letter-spacing:-0.23px">A Mineira Lingerie</u><s></s></div><div class="row alt" style="top:161px;"><b>306</b><u style="letter-spacing:-0.20px">A Simonelis Restaurante e Pastelaria</u><s></s></div><div class="row" style="top:184px;"><b>272</b><u style="letter-spacing:-0.10px">A Tinta Lar</u><s></s></div><div class="row alt" style="top:207px;"><b>202</b><u style="letter-spacing:-0.22px">Academia Vida Ativa</u><s></s></div><div class="row" style="top:230px;"><b>308</b><u style="letter-spacing:-0.19px">Adriana Cabeleireira</u><s></s></div><div class="pg">
<svg class="abs" style="left:8px;top:8px" width="9" height="10" viewBox="0 0 9 10"><path d="M1,1H5.500L7.800,3.300V9H1Z" fill="#fbfbfb" stroke="#8b8b8b" stroke-width=".9"/><path d="M5.500,1V3.300H7.800" fill="none" stroke="#8b8b8b" stroke-width=".8"/></svg>
<i class="sp" style="left:25px"></i>
<svg class="abs" style="left:35px;top:7px" width="11" height="11" viewBox="0 0 11 11"><path d="M8.600,4A3.600,3.600 0 0 0 2.200,4.600M2.400,7A3.600,3.600 0 0 0 8.800,6.400" fill="none" stroke="#8a8a8a" stroke-width="1"/><path d="M6.600,.6L9.600,2.600L6.600,4.600Z M4.400,10.400L1.400,8.400L4.400,6.400Z" fill="#8a8a8a"/></svg>
<svg class="abs" style="left:58px;top:8px" width="10" height="9" viewBox="0 0 10 9"><rect x=".5" y="3" width="5" height="5" fill="#f6f6f6" stroke="#888" stroke-width=".9"/><rect x="3.500" y=".5" width="5.500" height="5" fill="#f6f6f6" stroke="#888" stroke-width=".9"/><rect x="3.500" y=".5" width="5.500" height="1.300" fill="#999"/></svg>
<svg class="abs" style="left:80px;top:8px" width="10" height="9" viewBox="0 0 10 9"><rect x="2.500" y=".5" width="5" height="3.500" fill="#fff" stroke="#858585" stroke-width=".9"/><rect x=".5" y="4" width="9" height="3" rx=".8" fill="#9a9a9a" stroke="#7a7a7a" stroke-width=".8"/><rect x="2" y="6.300" width="6" height="2.200" fill="#fff" stroke="#858585" stroke-width=".8"/></svg>
<svg class="abs" style="left:154px;top:10px" width="10" height="6" viewBox="0 0 10 6"><rect x="0" y="0" width="1.300" height="6" fill="#d9d9d9"/><path d="M8.500,0V6L2.500,3Z" fill="#d9d9d9"/></svg>
<svg class="abs" style="left:173px;top:10px" width="12" height="6" viewBox="0 0 12 6"><path d="M5.500,0V6L0,3Z M11.500,0V6L6,3Z" fill="#d9d9d9"/></svg>
<i class="sp" style="left:190px"></i>
<span class="t" style="left:195px;letter-spacing:-0.35px;">Página</span><div class="bx" style="left:231px;top:4px;width:28px;">1</div><span class="t" style="left:262px;letter-spacing:-0.2px;">de 35</span>
<i class="sp" style="left:292px"></i>
<svg class="abs" style="left:301px;top:10px" width="11" height="6" viewBox="0 0 11 6"><path d="M0,0V6L5.500,3Z" fill="#a8a8a8"/><path d="M6,.3L10.500,3L6,5.700" fill="none" stroke="#a8a8a8" stroke-width="1.100"/></svg>
<svg class="abs" style="left:322px;top:10px" width="9" height="6" viewBox="0 0 9 6"><rect x="7.500" y="0" width="1.300" height="6" fill="#a8a8a8"/><path d="M0,0V6L6.500,3Z" fill="#a8a8a8"/></svg>
<div class="bx" style="left:338px;top:3px;height:17px;width:47px;line-height:15px;font-size:11px;padding-left:5px;">9<i style="position:absolute;right:5px;top:6px;border:4px solid transparent;border-top:4px solid #000;border-bottom:0;"></i></div>
<span class="t" style="right:6px;letter-spacing:-0.1px;">Ver 1 - 9 de 309</span>
</div></div>
</body>
</html>
